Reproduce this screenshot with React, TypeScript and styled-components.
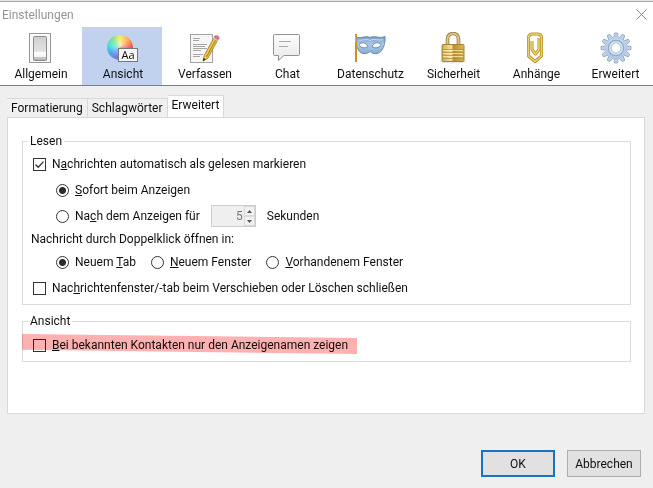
import React from "react";
import styled, { createGlobalStyle, css } from "styled-components";

const GlobalStyle = createGlobalStyle`
  * { box-sizing: border-box; }
  html, body { margin: 0; background: #efefef; }
  body, button, input {
    font-family: Roboto, "Open Sans", sans-serif;
    font-size: 12px;
    line-height: 16px;
    color: #101010;
  }
`;

const Window = styled.div`
  display: flex;
  flex-direction: column;
  min-height: 100vh;
  background: #efefef;
  border-top: 1px solid #e6e6e6;
`;

const TitleBar = styled.header`
  display: flex;
  align-items: center;
  justify-content: space-between;
  height: 26px;
  padding: 0 6px 0 2px;
  border-top: 1px solid #a6a6a6;
  background: #fff;
`;

const Title = styled.h1`
  margin: 0;
  font-size: 12px;
  font-weight: 400;
  color: #949494;
`;

const CloseButton = styled.button`
  display: flex;
  padding: 0;
  border: 0;
  background: none;
`;

const Toolbar = styled.nav`
  display: grid;
  grid-template-columns: repeat(3, 82fr) repeat(4, 83fr) 75fr;
  height: 59px;
  background: #fff;
  border-bottom: 1px solid #7d807d;
`;

const Category = styled.button<{ $active?: boolean }>`
  display: flex;
  flex-direction: column;
  align-items: center;
  min-width: 0;
  margin: 0 2px 0 0;
  padding: 5px 0 0 2px;
  gap: 2px;
  border: 0;
  white-space: nowrap;
  background: ${(p) => (p.$active ? "#c1d2ee" : "transparent")};

  svg { flex: none; }
`;

const Content = styled.main`
  display: flex;
  flex-direction: column;
  flex: 1;
  padding: 9px 8px 0 7px;
`;

const TabStrip = styled.div`
  display: flex;
  align-items: flex-end;
`;

const Tab = styled.button<{ $active?: boolean }>`
  height: 19px;
  padding: 0 4px;
  border: 1px solid #d9d9d9;
  border-width: 1px 1px 0 0;
  background: #f0f0f0;
  white-space: nowrap;

  ${(p) =>
    p.$active &&
    css`
      height: 22px;
      padding: 0 4px 3px;
      background: #fff;
    `}
`;

const Panel = styled.section`
  display: flex;
  flex-direction: column;
  gap: 8px;
  padding: 15px 13px 51px 14px;
  border: 1px solid #d9d9d9;
  background: #fff;
`;

const Group = styled.fieldset`
  min-width: 0;
  margin: 0;
  padding: 2px 10px 3px;
  border: 1px solid #dcdcdc;
`;

const Legend = styled.legend`
  margin-left: -5px;
  padding: 0 2px;
`;

const Row = styled.div<{ $indent?: boolean; $gap?: number }>`
  display: flex;
  align-items: center;
  min-height: 26px;
  gap: ${(p) => p.$gap ?? 0}px;
  padding-left: ${(p) => (p.$indent ? 23 : 0)}px;
`;

const TextRow = styled.div`
  min-height: 20px;
  padding: 2px 0;
  margin-left: -2px;
`;

const Option = styled.label`
  display: flex;
  align-items: center;
  gap: 6px;
  white-space: nowrap;
`;

const Checkbox = styled.input.attrs({ type: "checkbox" })`
  appearance: none;
  flex: none;
  width: 13px;
  height: 13px;
  margin: 0;
  border: 1px solid #333;
  background: #fff;

  &:checked {
    background: #fff
      url("data:image/svg+xml,%3Csvg xmlns='http://www.w3.org/2000/svg' viewBox='0 0 11 11'%3E%3Cpath d='M1.5 5.5l2.7 2.7 5.3-5.6' fill='none' stroke='%23333' stroke-width='1.3'/%3E%3C/svg%3E")
      center / 11px 11px no-repeat;
  }
`;

const Radio = styled.input.attrs({ type: "radio" })`
  appearance: none;
  flex: none;
  width: 13px;
  height: 13px;
  margin: 0;
  border: 1px solid #333;
  border-radius: 50%;
  background: #fff;

  &:checked {
    background: radial-gradient(circle, #2b2b2b 3px, #fff 4px);
  }
`;

const Stepper = styled.div`
  display: flex;
  width: 45px;
  height: 22px;
  border: 1px solid #ccc;
  background: #efefef;
`;

const StepperField = styled.input`
  flex: 1;
  min-width: 0;
  padding: 0 1px;
  border: 0;
  background: transparent;
  text-align: right;
  color: #777;
`;

const StepperButtons = styled.div`
  display: grid;
  grid-template-rows: 1fr 1fr;
  width: 11px;
`;

const StepButton = styled.button`
  display: flex;
  align-items: center;
  justify-content: center;
  padding: 0;
  border: 1px solid #dadada;
  background: #f2f2f2;
`;

const Marked = styled.div`
  position: relative;
  padding-top: 1px;

  &::after {
    content: "";
    position: absolute;
    inset: 3px auto 4px -11px;
    width: 335px;
    background: #ffb0b0;
    mix-blend-mode: multiply;
    clip-path: polygon(0 0, 100% 20%, 100% 100%, 0 79%);
    pointer-events: none;
  }
`;

const Footer = styled.footer`
  display: flex;
  justify-content: flex-end;
  gap: 12px;
  padding: 36px 4px 11px;
`;

const DialogButton = styled.button<{ $primary?: boolean }>`
  min-width: 74px;
  height: 27px;
  padding: 0 6px;
  border: ${(p) => (p.$primary ? "2px solid #1874c0" : "1px solid #adadad")};
  background: #e1e1e1;
`;

const SwitchIcon = () => (
  <svg width="32" height="32" viewBox="0 0 32 32" aria-hidden="true">
    <defs>
      <linearGradient id="sw" x2="0" y2="1">
        <stop stopColor="#d0d0d0" />
        <stop offset=".72" stopColor="#e2e2e2" />
        <stop offset=".76" stopColor="#fff" />
        <stop offset="1" stopColor="#f4f4f4" />
      </linearGradient>
    </defs>
    <rect x="4.5" y="1.5" width="21" height="29" fill="#f7f7f7" stroke="#999" />
    <rect x="8.5" y="4.5" width="13" height="24" rx="1" fill="#b4b4b4" stroke="#8c8c8c" />
    <rect x="9" y="5" width="12" height="20" fill="url(#sw)" />
    <path d="M9 25h12v2H10z" fill="#c6c6c6" />
  </svg>
);

const Wheel = styled.span`
  position: relative;
  flex: none;
  width: 32px;
  height: 32px;

  &::before {
    content: "";
    position: absolute;
    inset: 3px 6px 4px 0;
    border-radius: 50%;
    background:
      radial-gradient(circle at 50% 40%, #ffffff99, #fff0 60%),
      conic-gradient(#f0e94c, #ff9640 50deg, #ef5050 90deg, #d958b0 140deg, #8c6fe0 190deg, #4aa8ee 240deg, #3de0dc 280deg, #6fdf74 320deg, #f0e94c);
  }
`;

const WheelTag = styled.span`
  position: absolute;
  right: 1px;
  bottom: 2px;
  width: 20px;
  height: 14px;
  border: 1px solid #777;
  background: #f6f6f6;
  font-family: "Open Sans", sans-serif;
  font-size: 11px;
  line-height: 12px;
  text-align: center;
`;

const ColorIcon = () => (
  <Wheel>
    <WheelTag>Aa</WheelTag>
  </Wheel>
);

const ComposeIcon = () => (
  <svg width="32" height="32" viewBox="0 0 32 32" aria-hidden="true">
    <rect x="1.5" y="2.5" width="22" height="28" fill="#f6f6f6" stroke="#a3a3a3" />
    <path d="M4 6.5h7M4 8.5h6M4 12.5h14M4 14.5h12M4 16.5h14M4 18.5h8M4 22.5h10M4 24.5h7" stroke="#a6a6a6" />
    <g transform="translate(-1.5 0)">
      <path d="M15.5 29l1-5L26 6.5l4 2L20.5 26z" fill="#edc84d" stroke="#9b7922" strokeWidth=".8" />
      <path d="M19 25L28.2 8" stroke="#b88a21" strokeWidth="1.2" />
      <path d="M15.3 29.5l.8-3.5 2.4 1.2z" fill="#333" />
      <path d="M25.5 7l1.2-2.3 4.2 2.2L29.7 9z" fill="#c8cbd0" />
      <path d="M26.5 5c.8-2.3 5.6-1.5 5 1.2l-.8 1.5z" fill="#e77780" stroke="#c35662" strokeWidth=".7" />
    </g>
  </svg>
);

const ChatIcon = () => (
  <svg width="32" height="32" viewBox="0 0 32 32" aria-hidden="true">
    <defs>
      <linearGradient id="chat" x2="0" y2="1">
        <stop stopColor="#fdfdfd" />
        <stop offset="1" stopColor="#e9e9e9" />
      </linearGradient>
    </defs>
    <path d="M2.5 2.5h24q1 0 1 1v19q0 1-1 1H12L6.5 28.5V23.500h-4q-1 0-1-1v-19q0-1 1-1z" fill="url(#chat)" stroke="#929292" />
    <path d="M7 9.5h12M7 14.5h9" stroke="#aaa" />
  </svg>
);

const MaskIcon = () => (
  <svg width="34" height="32" viewBox="0 0 34 32" aria-hidden="true">
    <defs>
      <linearGradient id="mask" x2="0" y2="1">
        <stop stopColor="#7799bb" />
        <stop offset=".45" stopColor="#a9c9e8" />
        <stop offset="1" stopColor="#86acd2" />
      </linearGradient>
    </defs>
    <path d="M2 5C7 7 11 3 16 5.500 21 3 25 7 31 4.500 32 12 28 21 23 21.500 19 22 18 21 16 19.500 14 21 13 22 9 21.500 4 21 1 12 2 5z" fill="url(#mask)" stroke="#6485a5" strokeWidth=".9" />
    <path d="M4 8C8 9 12 6 16 8.500 20 6 24 9 29 7.500" fill="none" stroke="#cadff1" strokeWidth=".9" />
    <path d="M5 12.500C7 10 12 10 14 14.500 11 16.500 7 16.500 5 12.500zM27 12.500C25 10 20 10 18 14.500 21 16.500 25 16.500 27 12.500z" fill="#fff" stroke="#6485a5" strokeWidth=".9" />
    <path d="M2 2v3M2 10v20" stroke="#c9971f" strokeWidth="2" />
  </svg>
);

const LockIcon = () => (
  <svg width="32" height="32" viewBox="0 0 32 32" aria-hidden="true">
    <defs>
      <linearGradient id="lock" x2="1" y2="0">
        <stop stopColor="#cfaa4c" />
        <stop offset=".4" stopColor="#f3df9e" />
        <stop offset=".46" stopColor="#ecd58a" />
        <stop offset=".5" stopColor="#b98f2c" />
        <stop offset="1" stopColor="#d7b55a" />
      </linearGradient>
    </defs>
    <ellipse cx="15" cy="29" rx="13" ry="2.5" fill="#8883" />
    <path d="M9.5 14V7a5.5 5.5 0 0 1 11 0v7" fill="none" stroke="#8d7537" strokeWidth="3.6" />
    <path d="M9.5 14V7a5.5 5.5 0 0 1 11 0v7" fill="none" stroke="#dfc987" strokeWidth="2" />
    <rect x="4" y="12.5" width="22" height="17" rx="1" fill="url(#lock)" stroke="#a5843a" />
    <path d="M4 17.5h22M4 20.5h22M4 23.5h22M4 26.5h22" stroke="#b08c38" strokeWidth=".7" />
    <path d="M5 18.5h20M5 21.5h20M5 24.5h20" stroke="#fff0b8" strokeWidth=".7" />
  </svg>
);

const clipPath = "M11 9v8.5l3.5 4.5 3.5-4.5V6M20.500 12V6q0-4-4-4h-5q-4 0-4 4v18l6.500 5.500 6.500-5.500V9";

const ClipIcon = () => (
  <svg width="32" height="32" viewBox="0 0 32 32" aria-hidden="true">
    <g fill="none" strokeLinejoin="round">
      <path d={clipPath} stroke="#b18c22" strokeWidth="3" />
      <path d={clipPath} stroke="#edd070" strokeWidth="1.6" />
    </g>
  </svg>
);

const teeth = Array.from({ length: 12 }, (_, i) => i * 30);

const GearIcon = () => (
  <svg width="32" height="32" viewBox="0 0 32 32" aria-hidden="true">
    <defs>
      <linearGradient id="gear" x2="0" y2="1">
        <stop stopColor="#c3d6ea" />
        <stop offset="1" stopColor="#afc7e0" />
      </linearGradient>
    </defs>
    <g fill="#bdd0e4" stroke="#8ba5bf" strokeWidth=".8">
      {teeth.map((angle) => (
        <path key={angle} d="M13.7 6l.8-5h3l.8 5" transform={`rotate(${angle} 16 16)`} />
      ))}
      <circle cx="16" cy="16" r="10.8" fill="url(#gear)" stroke="#b3c8de" />
    </g>
    <circle cx="16" cy="16" r="7.6" fill="none" stroke="#8aa9cb" strokeWidth="1.2" />
    <circle cx="16" cy="16" r="5.8" fill="#fff" stroke="#dce8f4" strokeWidth="2" />
    <circle cx="16" cy="16" r="5" fill="#fff" stroke="#8fa9c4" strokeWidth=".8" />
  </svg>
);

const categories = [
  { label: "Allgemein", Icon: SwitchIcon },
  { label: "Ansicht", Icon: ColorIcon, active: true },
  { label: "Verfassen", Icon: ComposeIcon },
  { label: "Chat", Icon: ChatIcon },
  { label: "Datenschutz", Icon: MaskIcon },
  { label: "Sicherheit", Icon: LockIcon },
  { label: "Anhänge", Icon: ClipIcon },
  { label: "Erweitert", Icon: GearIcon },
];

export default function App() {
  return (
    <Window>
      <GlobalStyle />
      <TitleBar>
        <Title>Einstellungen</Title>
        <CloseButton aria-label="Schließen">
          <svg width="11" height="11" viewBox="0 0 11 11" aria-hidden="true">
            <path d="M.5.5l10 10m0-10l-10 10" stroke="#888" />
          </svg>
        </CloseButton>
      </TitleBar>
      <Toolbar>
        {categories.map(({ label, Icon, active }) => (
          <Category key={label} $active={active}>
            <Icon />
            <span>{label}</span>
          </Category>
        ))}
      </Toolbar>
      <Content>
        <TabStrip role="tablist">
          <Tab role="tab">Formatierung</Tab>
          <Tab role="tab">Schlagwörter</Tab>
          <Tab role="tab" aria-selected="true" $active>Erweitert</Tab>
        </TabStrip>
        <Panel>
          <Group>
            <Legend>Lesen</Legend>
            <Row>
              <Option>
                <Checkbox defaultChecked />
                <span>N<u>a</u>chrichten automatisch als gelesen markieren</span>
              </Option>
            </Row>
            <Row $indent>
              <Option>
                <Radio name="mark" defaultChecked />
                <span><u>S</u>ofort beim Anzeigen</span>
              </Option>
            </Row>
            <Row $indent $gap={11}>
              <Option>
                <Radio name="mark" />
                <span>Na<u>c</u>h dem Anzeigen für</span>
              </Option>
              <Stepper>
                <StepperField id="delay" defaultValue="5" disabled />
                <StepperButtons>
                  <StepButton disabled aria-label="Mehr">
                    <svg width="5" height="3" viewBox="0 0 5 3"><path d="M0 3L2.5 0 5 3z" fill="#555" /></svg>
                  </StepButton>
                  <StepButton disabled aria-label="Weniger">
                    <svg width="5" height="3" viewBox="0 0 5 3"><path d="M0 0l2.5 3L5 0z" fill="#555" /></svg>
                  </StepButton>
                </StepperButtons>
              </Stepper>
              <label htmlFor="delay">Sekunden</label>
            </Row>
            <TextRow>Nachricht durch Doppelklick öffnen in:</TextRow>
            <Row $indent $gap={15}>
              <Option>
                <Radio name="open" defaultChecked />
                <span>Neuem <u>T</u>ab</span>
              </Option>
              <Option>
                <Radio name="open" />
                <span><u>N</u>euem Fenster</span>
              </Option>
              <Option>
                <Radio name="open" />
                <span><u>V</u>orhandenem Fenster</span>
              </Option>
            </Row>
            <Row>
              <Option>
                <Checkbox />
                <span>Nac<u>h</u>richtenfenster/-tab beim Verschieben oder Löschen schließen</span>
              </Option>
            </Row>
          </Group>
          <Group>
            <Legend>Ansicht</Legend>
            <Marked>
              <Row>
                <Option>
                  <Checkbox />
                  <span><u>B</u>ei bekannten Kontakten nur den Anzeigenamen zeigen</span>
                </Option>
              </Row>
            </Marked>
          </Group>
        </Panel>
        <Footer>
          <DialogButton $primary>OK</DialogButton>
          <DialogButton>Abbrechen</DialogButton>
        </Footer>
      </Content>
    </Window>
  );
}
